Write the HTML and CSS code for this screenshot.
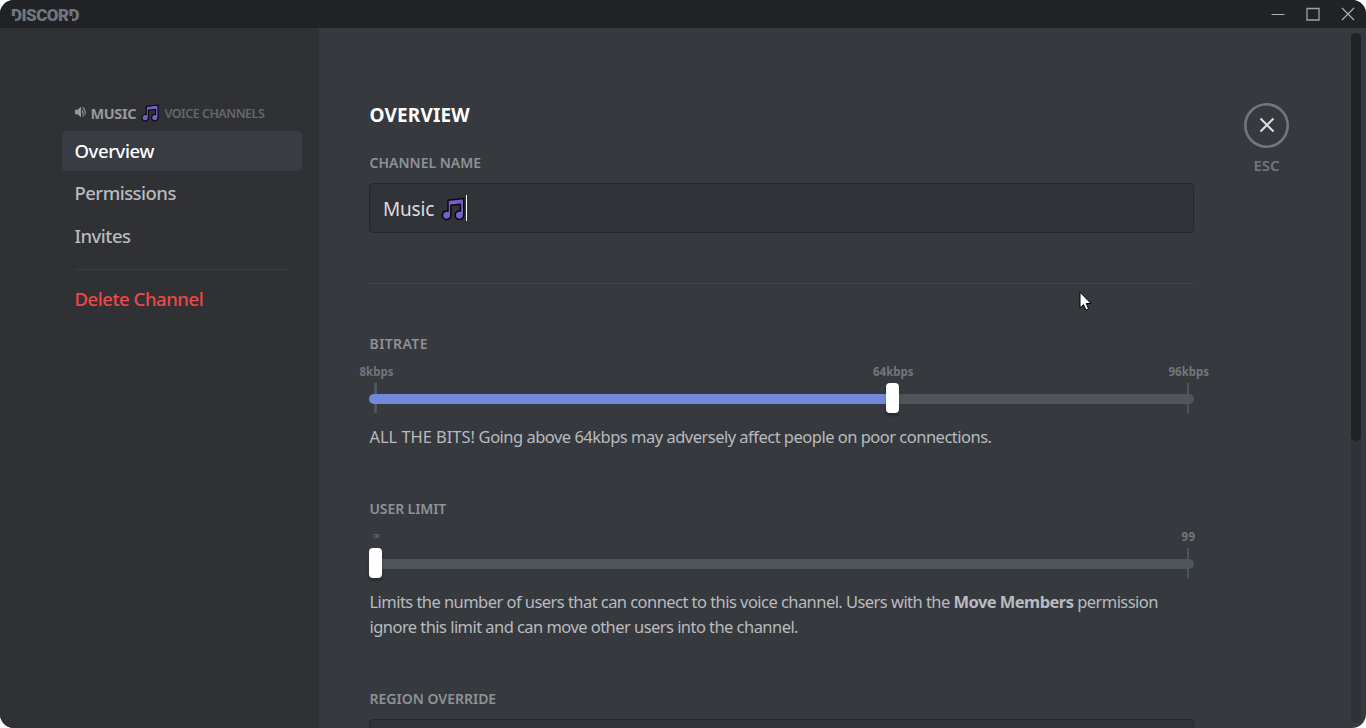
FILE: index.html
```html
<!DOCTYPE html>
<html lang="en">
<head>
<meta charset="utf-8">
<title>Channel settings</title>
<link rel="stylesheet" href="styles.css">
</head>
<body>
<svg class="defs" width="0" height="0" aria-hidden="true">
  <symbol id="note" viewBox="0 0 24 24">
    <path d="M7 3.200 22.700 1.400V18.500a4.300 4.300 0 1 1-3.300-4.500V7.300L9.900 8.200v10.300A4.300 4.300 0 1 1 7 14.200Z" fill="#755fc6" stroke="#08080c" stroke-width="1.500" stroke-linejoin="round"/>
  </symbol>
</svg>
<div class="window">
  <header class="titlebar">
    <div class="wordmark"><span class="cut">D</span>ISCOR<span class="cut">D</span></div>
    <div class="controls">
      <svg width="14" height="14" viewBox="0 0 14 14"><path d="M.5 7.500h13" stroke="#b0b2b5" stroke-width="1.200" fill="none"/></svg>
      <svg width="14" height="14" viewBox="0 0 14 14"><path d="M1 1.500h12v11.500H1z" stroke="#a0a2a5" stroke-width="1.300" fill="none"/></svg>
      <svg width="14" height="14" viewBox="0 0 14 14"><path d="M1 1 13 13M13 1 1 13" stroke="#b0b2b5" stroke-width="1.100" fill="none"/></svg>
    </div>
  </header>
  <div class="body">
    <nav class="sidebar">
      <div class="side-head">
        <svg class="speaker" width="12" height="12" viewBox="0 0 12 12"><path d="M0 3.800h2.500L6 .8v10.400L2.500 8.300H0z" fill="#96989d"/><path d="M7.200 4.300q1.700 1.700 0 3.500M7.500 1.500q6 4.500 0 9" fill="none" stroke="#96989d" stroke-width="1.100"/></svg>
        <b class="side-name">MUSIC</b>
        <svg class="side-note" width="18" height="18"><use href="#note"/></svg>
        <span class="side-type">VOICE CHANNELS</span>
      </div>
      <a class="item selected"><span>Overview</span></a>
      <a class="item"><span>Permissions</span></a>
      <a class="item"><span>Invites</span></a>
      <hr class="side-rule">
      <a class="item danger"><span>Delete Channel</span></a>
    </nav>
    <main class="content">
      <div class="column">
        <h1 class="title">OVERVIEW</h1>
        <h2 class="label label-name">CHANNEL NAME</h2>
        <div class="input"><span class="value">Music</span><svg class="input-note" width="24" height="24"><use href="#note"/></svg><i class="caret"></i></div>
        <hr class="rule">
        <h2 class="label label-bitrate">BITRATE</h2>
        <div class="slider">
          <span class="mark first">8kbps</span><span class="mark mid">64kbps</span><span class="mark last">96kbps</span>
          <i class="tick start"></i><i class="tick end"></i>
          <div class="track"><div class="fill"></div></div>
          <i class="grip grip-64"></i>
        </div>
        <p class="help"><span class="help-bits"><span class="shout">ALL THE BITS!</span> Going above 64kbps may adversely affect people on poor connections.</span></p>
        <h2 class="label label-limit">USER LIMIT</h2>
        <div class="slider">
          <span class="mark inf">∞</span><span class="mark max">99</span>
          <i class="tick end"></i>
          <div class="track"></div>
          <i class="grip grip-0"></i>
        </div>
        <p class="help">Limits the number of users that can connect to this voice channel. Users with the <b>Move Members</b> permission<br>ignore this limit and can move other users into the channel.</p>
        <h2 class="label label-region">REGION OVERRIDE</h2>
        <div class="input region"></div>
      </div>
      <div class="close">
        <svg width="46" height="46" viewBox="0 0 46 46"><circle cx="22.500" cy="23.500" r="21.200" fill="none" stroke="#72767d" stroke-width="2.600"/><path d="M16.500 16.500 29.500 29.500M29.500 16.500 16.500 29.500" stroke="#dcddde" stroke-width="2" fill="none"/></svg>
        <span class="esc">ESC</span>
      </div>
      <div class="scroll"><div class="thumb"></div></div>
    </main>
  </div>
  <svg class="pointer" width="14" height="21" viewBox="0 0 14 21"><path d="M1 1.200V16.800L4.500 13.600 7 19.200 9.600 18 7.300 12.500H12z" fill="#fff" stroke="#000" stroke-width="1"/></svg>
</div>
</body>
</html>
```

FILE: styles.css
```css
* { box-sizing: border-box; }
body { margin: 0; background: #fff; font-family: "Noto Sans", "Open Sans", sans-serif; overflow: hidden; }
.defs { position: absolute; }
.window { position: relative; width: 1366px; height: 728px; border-radius: 14px; overflow: hidden; background: #36393e; display: flex; flex-direction: column; }
.titlebar { height: 28px; background: #202225; display: flex; justify-content: space-between; align-items: center; padding: 0 11px 1px 11px; }
.wordmark { font: 900 17px/28px Roboto, sans-serif; color: #72767d; letter-spacing: -.55px; padding-top: 3px; }
.cut { position: relative; display: inline-block; line-height: 12px; }
.cut::after { content: ""; position: absolute; left: 0; bottom: 0; width: 4px; height: 5px; background: #202225; }
.controls { display: flex; gap: 21px; }
.controls svg { display: block; }
.body { flex: 1; display: flex; min-height: 0; }
.sidebar { width: 319px; background: #303135; padding: 75px 17px 0 62px; }
.side-head { height: 20px; margin-bottom: 8px; padding-left: 13px; display: flex; align-items: center; white-space: nowrap; }
.speaker { margin-right: 3.500px; margin-top: -2px; }
.side-name { font-size: 14.500px; line-height: 20px; margin-top: -1px; letter-spacing: -.4px; color: #96989d; width: 50px; }
.side-note { margin-top: -1px; margin-right: 6px; }
.side-type { font-size: 12.500px; font-weight: 600; line-height: 20px; letter-spacing: -.5px; margin-top: 1px; color: #64676c; }
.item { display: flex; align-items: center; height: 40px; padding: 0 0 2px 12.500px; margin-bottom: 2.500px; border-radius: 4px; font-size: 18.500px; font-weight: 500; letter-spacing: -.52px; color: #b9bbbe; white-space: nowrap; }
.selected { background: #393c43; color: #fff; letter-spacing: -.4px; }
.side-rule { border: 0; height: 1px; background: #3b3d43; margin: 13px 14px 9px 13px; }
.danger { color: #f04747; letter-spacing: -.45px; }
.content { flex: 1; display: flex; min-width: 0; padding-left: 50px; }
.column { width: 825px; padding-top: 75px; }
.title { margin: 0; padding-left: .5px; font-size: 19px; line-height: 24px; font-weight: 700; letter-spacing: .15px; color: #fff; white-space: nowrap; }
.label { margin: 0; padding-left: .5px; font-size: 14px; line-height: 20px; font-weight: 600; color: #8e9297; white-space: nowrap; }
.label-name { margin-top: 26px; }
.label-bitrate { letter-spacing: .4px; }
.label-limit { letter-spacing: -.1px; }
.input { display: flex; align-items: center; height: 50px; margin-top: 10px; padding-left: 13px; background: #303338; border: 1px solid #24262a; border-radius: 4px; font-size: 19px; color: #dcddde; }
.value { width: 58px; letter-spacing: -.2px; padding-top: 2px; }
.input-note { margin-top: 1px; }
.caret { width: 1px; height: 26px; background: #fff; margin-left: 1px; }
.rule { border: 0; height: 1px; background: #42454b; margin: 50px 0; }
.slider { position: relative; height: 60px; padding-top: 40px; }
.track { position: relative; height: 10px; border-radius: 5px; background: #4f555c; }
.fill { width: 523px; height: 10px; border-radius: 5px 0 0 5px; background: #7289da; }
.mark { position: absolute; top: 10px; font-size: 11.500px; line-height: 16px; font-weight: 700; color: #72767d; white-space: nowrap; }
.first { left: -9.500px; }
.mid { left: 504px; }
.last { left: 799.500px; }
.inf { left: 3px; top: 8px; font-family: "DejaVu Sans", sans-serif; font-weight: 400; font-size: 10.500px; }
.max { left: 812.500px; letter-spacing: .5px; }
.tick { position: absolute; top: 29px; height: 30px; background: #4f555c; }
.start { left: 5px; width: 3px; }
.end { left: 818px; width: 2px; }
.grip { position: absolute; top: 29px; width: 13px; height: 30px; border-radius: 4px; background: #fff; box-shadow: 0 3px 3px rgba(0,0,0,.25); }
.grip-64 { left: 517px; }
.grip-0 { left: 0; }
.help { margin: 10px 0 50px; padding-left: .5px; font-size: 16.500px; line-height: 25px; letter-spacing: -.55px; color: #b9bbbe; white-space: nowrap; }
.help-bits { letter-spacing: -.51px; }
.shout { letter-spacing: -.05px; }
.close { width: 46px; margin: 74px 0 0 50px; display: flex; flex-direction: column; align-items: center; }
.esc { font-size: 15px; line-height: 20px; margin: 7px 1px 0 0; font-weight: 600; color: #72767d; }
.scroll { width: 10px; height: 690px; margin: 5px 5px 0 auto; border-radius: 5px; background: #2f3237; }
.thumb { height: 408px; border-radius: 5px; background: #202225; }
.pointer { position: absolute; left: 1078.500px; top: 290.500px; }
```
